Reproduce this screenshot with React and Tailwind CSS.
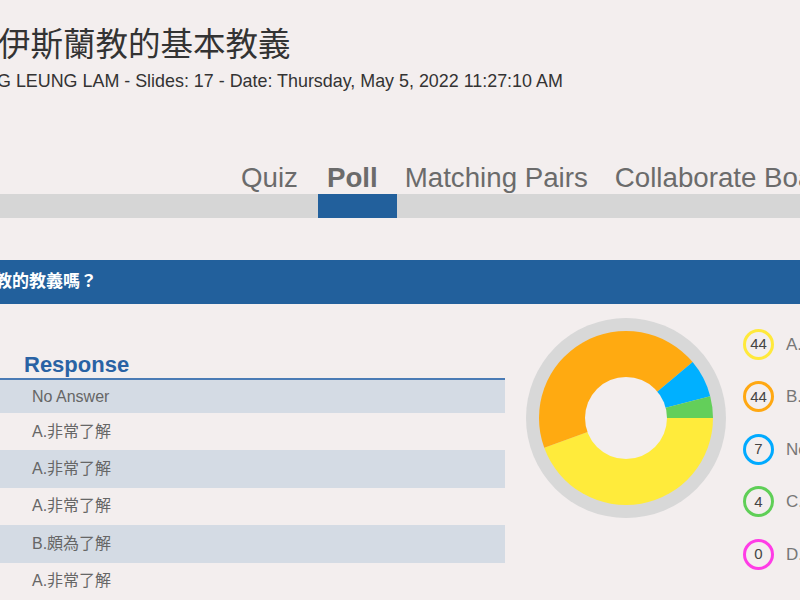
import React from "react";

const rows = [
  "No Answer",
  "A.非常了解",
  "A.非常了解",
  "A.非常了解",
  "B.頗為了解",
  "A.非常了解",
];

const legend = [
  { n: 44, label: "A.非常了解", c: "border-[#ffe93b]" },
  { n: 44, label: "B.頗為了解", c: "border-[#ffa812]" },
  { n: 7, label: "No Answer", c: "border-[#00aaff]" },
  { n: 4, label: "C.不太了解", c: "border-[#5fcf57]" },
  { n: 0, label: "D.完全不了解", c: "border-[#ff3ce6]" },
];

export default function App() {
  return (
    <div
      className="w-[800px] h-[600px] overflow-hidden bg-[#f3eeee] text-[#333]"
      style={{ fontFamily: '"Liberation Sans", "Noto Sans CJK TC", sans-serif' }}
    >
      {/* Title */}
      <div className="pt-[22px] whitespace-nowrap">
        <div className="ml-[-2px] text-[32.5px] leading-[46px] text-[#333]">伊斯蘭教的基本教義</div>
        <div className="ml-[-3px] mt-[2px] text-[17.9px] leading-[22px] text-[#333]">
          G LEUNG LAM - Slides: 17 - Date: Thursday, May 5, 2022 11:27:10 AM
        </div>
      </div>

      {/* Tabs */}
      <div className="mt-[70px] flex whitespace-nowrap">
        <div className="w-[233px] shrink-0 flex flex-col">
          <div className="h-[32px]" />
          <div className="h-[24px] bg-[#d6d6d6]" />
        </div>
        {[
          { t: "Quiz", active: false, pr: "pr-[20px]" },
          { t: "Poll", active: true, pr: "pr-[19px]" },
          { t: "Matching Pairs", active: false, pr: "pr-[19px]" },
          { t: "Collaborate Board", active: false, pr: "pr-[19px]" },
        ].map((tab) => (
          <div key={tab.t} className="shrink-0 flex flex-col">
            <div
              className={`h-[32px] ${tab.active ? "pl-[9px]" : "pl-[8px]"} ${tab.pr} text-[27.7px] leading-[32px] text-[#6b6b6b] ${
                tab.active ? "font-bold" : ""
              }`}
            >
              {tab.t}
            </div>
            <div className={`h-[24px] ${tab.active ? "bg-[#22609c]" : "bg-[#d6d6d6]"}`} />
          </div>
        ))}
        <div className="flex-1 flex flex-col">
          <div className="h-[32px]" />
          <div className="h-[24px] bg-[#d6d6d6]" />
        </div>
      </div>

      {/* Question bar */}
      <div className="mt-[42px] h-[44px] bg-[#22609c] flex items-center whitespace-nowrap">
        <div className="ml-[-5px] text-[17px] font-bold text-white leading-[20px]">教的教義嗎？</div>
      </div>

      {/* Content */}
      <div className="flex">
        <div className="w-[505px] shrink-0 pt-[48px]">
          <div className="border-b-2 border-[#4a7bb5] pl-[24px] text-[22px] leading-[26px] font-bold text-[#2962a4]">
            Response
          </div>
          {rows.map((r, i) => (
            <div
              key={i}
              className={`${i === 0 ? "h-[33px]" : "h-[37.4px]"} flex items-center pl-[32px] text-[16px] text-[#666] ${
                i % 2 === 0 ? "bg-[#d4dbe4]" : ""
              }`}
            >
              {r}
            </div>
          ))}
        </div>

        <div className="ml-[21px] mt-[14px] shrink-0">
          <svg width="200" height="200" viewBox="0 0 200 200">
            <circle cx="100" cy="100" r="100" fill="#d8d8d8" />
            <path d="M100 100 L187 100 A87 87 0 0 1 18.25 129.76 Z" fill="#ffeb3b" />
            <path d="M100 100 L18.25 129.76 A87 87 0 0 1 166.65 44.08 Z" fill="#ffaa11" />
            <path d="M100 100 L166.65 44.08 A87 87 0 0 1 184.21 78.14 Z" fill="#00b0ff" />
            <path d="M100 100 L184.21 78.14 A87 87 0 0 1 187 100 Z" fill="#63cf5a" />
            <circle cx="100" cy="100" r="41" fill="#f3eeee" />
          </svg>
        </div>

        <div className="ml-[17px] mt-[14px] flex flex-col whitespace-nowrap">
          {legend.map((l, i) => (
            <div key={i} className="h-[52.5px] flex items-center">
              <div
                className={`w-[31px] h-[31px] rounded-full border-[3.5px] ${l.c} flex items-center justify-center text-[15px] text-[#444] shrink-0`}
              >
                {l.n}
              </div>
              <div className="ml-[12px] text-[17px] text-[#777]">{l.label}</div>
            </div>
          ))}
        </div>
      </div>
    </div>
  );
}
